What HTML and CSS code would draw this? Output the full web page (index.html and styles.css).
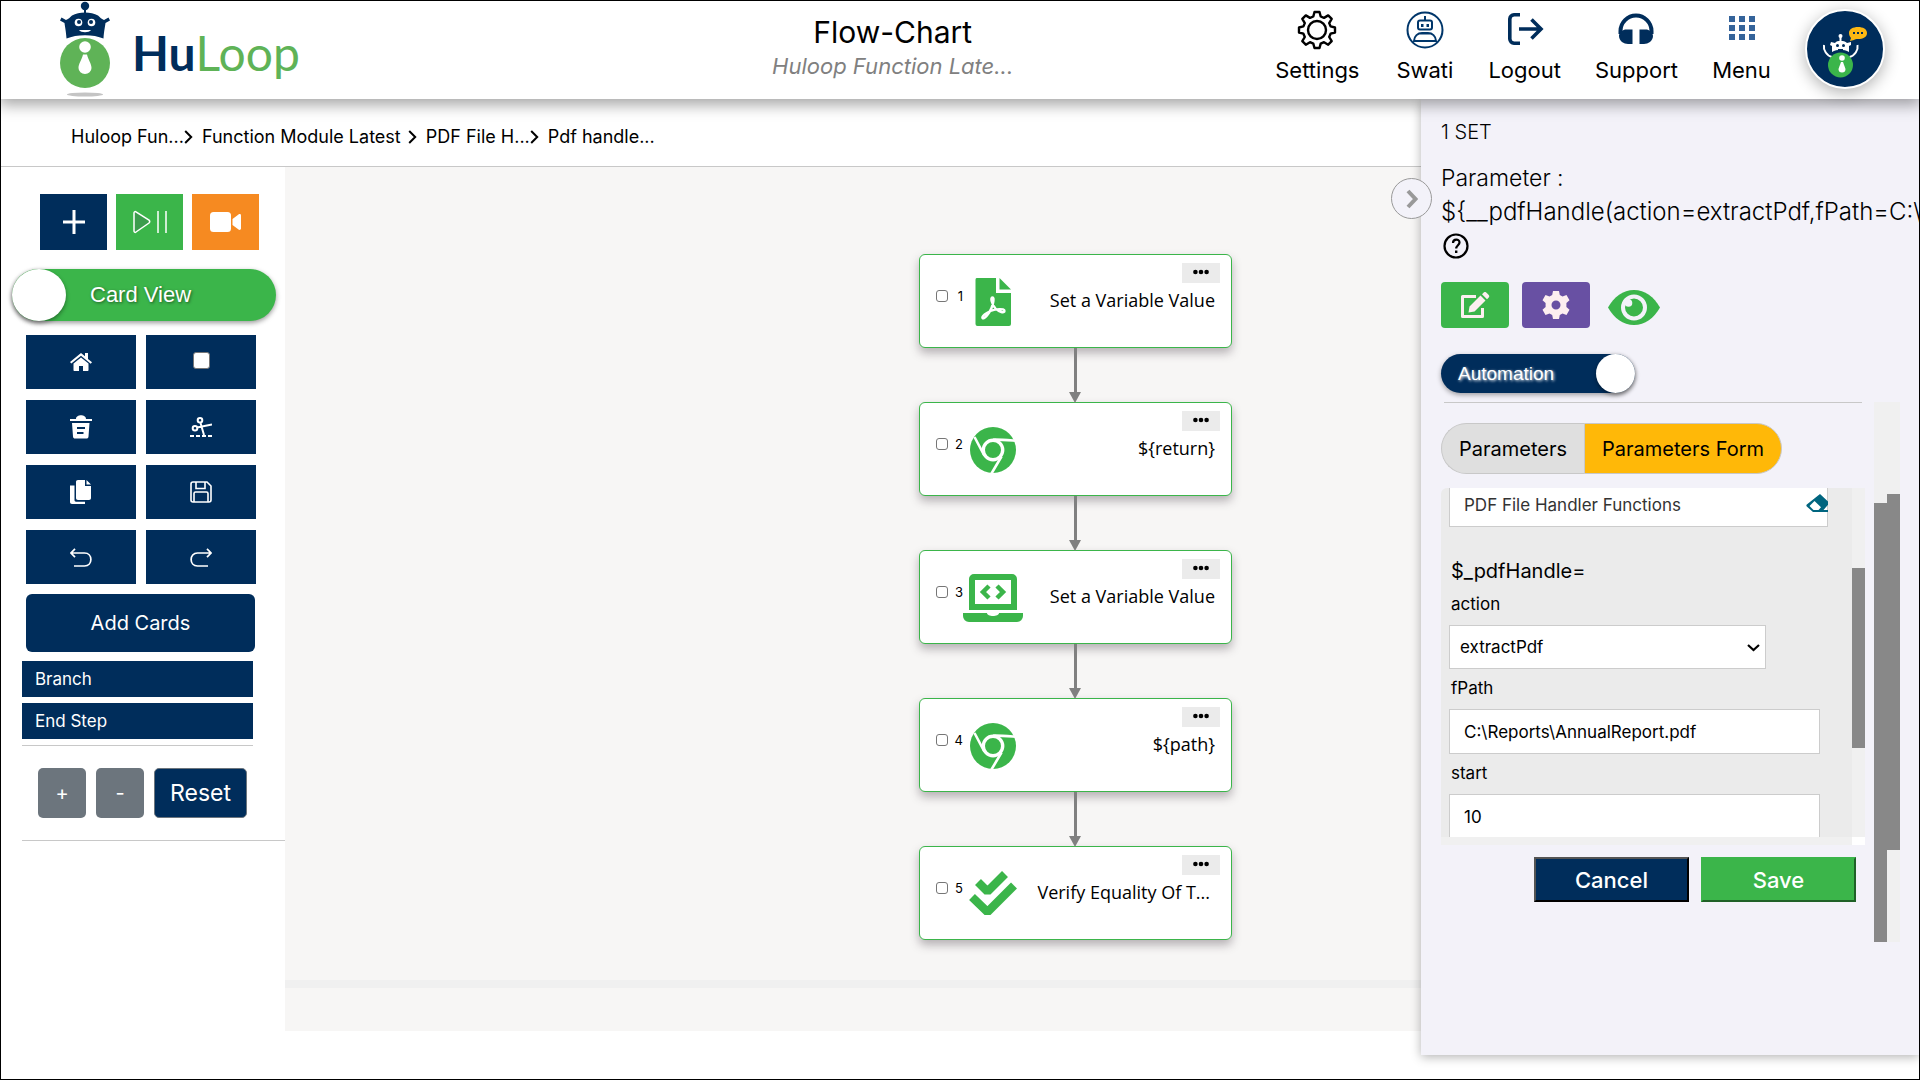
FILE: index.html
```html
<!DOCTYPE html>
<html lang="en">
<head>
<meta charset="utf-8">
<title>HuLoop Flow-Chart</title>
<meta name="viewport" content="width=device-width, initial-scale=1">
<link rel="stylesheet" href="styles.css">
</head>
<body>
<svg class="sprite" aria-hidden="true">
  <symbol id="i-chevron" viewBox="0 0 9 14"><path d="M1.2 1l6 6-6 6" fill="none" stroke="currentColor" stroke-width="2"/></symbol>
  <symbol id="i-dots" viewBox="0 0 16 6"><circle cx="2.4" cy="3" r="2.3"/><circle cx="8" cy="3" r="2.3"/><circle cx="13.6" cy="3" r="2.3"/></symbol>
  <symbol id="i-chrome" viewBox="0 0 48 48">
    <circle cx="24" cy="24" r="23" fill="#3bb54a"/>
    <circle cx="24" cy="24" r="9.7" fill="none" stroke="#fff" stroke-width="3.4"/>
    <path d="M24 13.7c7-.2 14 .4 22 1M15.300 29.500L5.500 11M32.500 30.500L22.500 47.500" fill="none" stroke="#fff" stroke-width="2.600"/>
  </symbol>
  <symbol id="i-eraser" viewBox="0 0 24 20"><path d="M14 0l9.500 9L17.500 16H24v2H7L.8 12.500a1.500 1.500 0 010-2zM8.500 7L3.500 12l4 4h5l2.500-2.700z" fill="#00657f" fill-rule="evenodd"/></symbol>
</svg>

<header class="topbar">
  <a class="brand" href="#" aria-label="HuLoop home">
    <svg class="brand-robot" viewBox="0 0 50 96" aria-hidden="true">
      <circle cx="25" cy="5" r="4.200" fill="#002d5b"/><path d="M24 8h2v6h-2z" fill="#002d5b"/>
      <path d="M6.500 37.500C6 30 5 26 4.500 22L0 19.500 1.500 16.500 6 19c3-1 4-3 6-4.500C19 10.500 31 10.500 38 14.500c2 1.500 3 3.500 6 4.500l4.500-2.500 1.500 3-4.500 2.500c-.5 4-1.500 8-2 15.500-10-4.500-27-4.500-37 0z" fill="#002d5b"/>
      <circle cx="18.500" cy="21.500" r="3.800" fill="#fff"/><circle cx="31.500" cy="21.500" r="3.800" fill="#fff"/>
      <circle cx="19" cy="21" r="2" fill="#002d5b"/><circle cx="31" cy="21" r="2" fill="#002d5b"/>
      <path d="M19 29h12c-2 3-10 3-12 0z" fill="#fff"/>
      <circle cx="25" cy="62" r="25" fill="#5fb357"/>
      <circle cx="25" cy="46" r="5.800" fill="#fff"/>
      <path d="M23 53.500h4c1 5 4.500 9 4.500 13.500a6.500 6 0 01-13 0c0-4.500 3.500-8.500 4.500-13.500z" fill="#fff"/>
      <ellipse cx="25" cy="93.500" rx="18" ry="2" fill="#c4c4c4"/>
    </svg>
    <span class="brand-name"><b>Hu</b>Loop</span>
  </a>
  <div class="title">
    <h1>Flow-Chart</h1>
    <p>Huloop Function Late...</p>
  </div>
  <nav class="topnav">
    <a href="#" class="wide">
      <svg width="40" height="40" viewBox="0 0 40 40" fill="none" stroke="#000" stroke-width="2.400" stroke-linejoin="round"><circle cx="20" cy="20" r="9"/><path d="M17.500 2h5l1.200 4.500 3.300 1.400 4.200-2.500 3.500 3.500-2.500 4.200 1.400 3.300 4.400 1.100v5l-4.400 1.200-1.400 3.300 2.500 4.200-3.500 3.500-4.200-2.500-3.300 1.400L22.500 38h-5l-1.200-4.400-3.300-1.400-4.200 2.500-3.500-3.500 2.500-4.200-1.400-3.300L2 22.500v-5l4.400-1.100 1.400-3.300-2.500-4.200 3.500-3.500L13 7.900l3.300-1.400z"/></svg>
      Settings</a>
    <a href="#">
      <svg width="40" height="40" viewBox="0 0 40 40" fill="none" stroke="#00366a" stroke-width="2"><circle cx="20" cy="20" r="17.500"/><rect x="13" y="10.500" width="14" height="9" rx="2"/><path d="M20 6v4M9 31c0-5 4-8 8-8h6c4 0 8 3 8 8zM14 23.500h12"/><path d="M16 14h2.500v3H16zM21.500 14H24v3h-2.500z" fill="#00366a" stroke="none"/></svg>
      Swati</a>
    <a href="#">
      <svg width="40" height="40" viewBox="0 0 40 40" fill="none" stroke="#002d5b" stroke-width="3.600"><path d="M11 4.800H5A4.500 4.500 0 00.800 9v20A4.500 4.500 0 005 33.200h6M10 19h21M22.500 9.500L32 19l-9.500 9.500" transform="translate(-2 0)" class="logout-arrow"/></svg>
      Logout</a>
    <a href="#">
      <svg width="40" height="40" viewBox="0 0 40 40"><path d="M4.500 24v-3a15.500 15.500 0 0131 0v3" fill="none" stroke="#002d5b" stroke-width="4"/><path d="M9 19.500h7.500V34H12c-4 0-9-3-9-8 0-2.500 2.500-5.500 6-6.500zM31 19.500h-7.500V34H28c4 0 9-3 9-8 0-2.500-2.500-5.500-6-6.500z" fill="#002d5b"/></svg>
      Support</a>
    <a href="#">
      <svg width="40" height="40" viewBox="0 0 40 40" fill="#34639a"><path d="M7 6h6v6H7zM17 6h6v6h-6zM27 6h6v6h-6zM7 15h6v6H7zM17 15h6v6h-6zM27 15h6v6h-6zM7 24h6v6H7zM17 24h6v6h-6zM27 24h6v6h-6z"/></svg>
      Menu</a>
    <button class="assistant" type="button" aria-label="Assistant">
      <svg width="76" height="76" viewBox="0 0 76 76" aria-hidden="true"><path d="M42 22c0-4 4-6 9-6s9 2 9 6-4 6-9 6c-2 0-3 0-4 1l-4 1 1-3c-1-1-2-3-2-5z" fill="#fdb813"/><path d="M46 21h2v2h-2zM50 21h2v2h-2zM54 21h2v2h-2z" fill="#002d5b"/><circle cx="33.500" cy="25" r="2" fill="#fff"/><path d="M32.500 26h2v4h-2zM24 31l4 1c2-3 9-3 12 0l4-1v3l-2 1v6c-5-3-12-3-17 0v-6l-2-1z" fill="#fff"/><circle cx="30.500" cy="34.500" r="1.500" fill="#002d5b"/><circle cx="36.500" cy="34.500" r="1.500" fill="#002d5b"/><path d="M31 38.500h5" stroke="#002d5b"/><path d="M17 34c-1 5 3 11 8 12M50.500 34c1 5-3 11-8 12" stroke="#fff" stroke-width="2" fill="none"/><circle cx="33.500" cy="54" r="12.500" fill="#3bb54a"/><circle cx="35" cy="47" r="2.800" fill="#fff"/><path d="M34 51h2l2.500 7a3.400 3.400 0 01-7 0z" fill="#fff"/></svg>
    </button>
  </nav>
</header>

<div class="page">
  <div class="main">
    <nav class="crumbs" aria-label="Breadcrumb">
      <a href="#">Huloop Fun...</a><svg class="tight"><use href="#i-chevron"/></svg>
      <a href="#">Function Module Latest</a><svg><use href="#i-chevron"/></svg>
      <a href="#">PDF File H...</a><svg class="tight"><use href="#i-chevron"/></svg>
      <a href="#">Pdf handle...</a>
    </nav>

    <div class="workspace">
      <aside class="sidebar">
        <div class="run-row">
          <button type="button" class="navy" aria-label="Add"><svg width="24" height="26" viewBox="0 0 24 26"><path d="M12 1v24M1 13h22" stroke="#fff" stroke-width="3"/></svg></button>
          <button type="button" class="green" aria-label="Run or pause"><svg width="34" height="24" viewBox="0 0 34 24"><path d="M1 3c0-1 1-2 2-1l13 8c1 1 1 2 0 3L3 22c-1 1-2 0-2-1z" fill="#3c9c4d" stroke="#fff" stroke-width="1.500"/><path d="M25 1v22M33 1v22" stroke="#fff" stroke-width="1.500"/></svg></button>
          <button type="button" class="orange" aria-label="Record"><svg width="32" height="20" viewBox="0 0 32 20" fill="#fff"><rect width="21" height="20" rx="3.500"/><path d="M22.500 7l6-4.500c1-.8 2.500-.3 2.500 1v13c0 1.300-1.500 1.800-2.500 1l-6-4.500z"/></svg></button>
        </div>

        <label class="view-toggle"><input type="checkbox" class="hidden-check"><span class="knob"></span><span>Card View</span></label>

        <div class="tools">
          <button type="button" aria-label="Home"><svg width="22" height="18" viewBox="0 0 22 18" fill="#fff"><path d="M0 9L11 0l4 3.300V0h3v6l4 3.200-1.300 1.500L11 2.700 1.300 10.500z"/><path d="M11 4.500l7.500 6V17c0 .6-.4 1-1 1H13v-5H9v5H4.500c-.6 0-1-.4-1-1v-6.500z"/></svg></button>
          <label class="tool-check"><input type="checkbox" aria-label="Select all"></label>
          <button type="button" aria-label="Delete"><svg width="22" height="24" viewBox="0 0 22 24" fill="#fff"><path d="M0 4h6c0-5 10-5 10 0h6v2H0z"/><path d="M2 8h17.500l-1 13.500c-.1 1.500-1 2-2 2h-11.500c-1 0-1.900-.5-2-2zM7 12v2h8v-2zM7 17v2h6.500v-2z" fill-rule="evenodd"/></svg></button>
          <button type="button" aria-label="Cut"><svg width="22" height="20" viewBox="0 0 22 20" fill="none" stroke="#fff" stroke-width="2"><circle cx="10" cy="3.300" r="2.300"/><circle cx="5" cy="11.300" r="2.300"/><path d="M10.500 6l3.500 12M7 10.500l15-3" /><path d="M0 19h4M6 19h4M12 19h4M18 19h4"/></svg></button>
          <button type="button" aria-label="Copy"><svg width="22" height="26" viewBox="0 0 22 26" fill="#fff"><path d="M8 1h7v6h6v12c0 1-.7 2-2 2H8c-1.300 0-2-.7-2-2V3c0-1.300.7-2 2-2zM16.500 1l4.500 4.500h-4.500z"/><path d="M0 6.500h4.500V21c0 1 .5 1.700 1.500 1.700h9V25H2c-1.300 0-2-.7-2-2z"/></svg></button>
          <button type="button" aria-label="Save flow"><svg width="22" height="22" viewBox="0 0 22 22" fill="none" stroke="#fff" stroke-width="1.600"><path d="M3 1h14l4 4v14a2 2 0 01-2 2H3a2 2 0 01-2-2V3a2 2 0 012-2zM6 1v6.500h9V1M4 21v-8.500c0-.8.500-1.500 1.500-1.500h11c1 0 1.500.7 1.500 1.500V21"/></svg></button>
          <button type="button" aria-label="Undo"><svg width="22" height="19" viewBox="0 0 22 19" fill="none" stroke="#fff" stroke-width="1.700"><path d="M1 5h13.500c8.500 0 8.500 13 0 13H4M5 .8L1 5l4 4.200"/></svg></button>
          <button type="button" aria-label="Redo"><svg width="22" height="19" viewBox="0 0 22 19" fill="none" stroke="#fff" stroke-width="1.700"><path d="M21 5H7.500c-8.500 0-8.500 13 0 13H18M17 .8L21 5l-4 4.200"/></svg></button>
        </div>

        <button type="button" class="add-cards">Add Cards</button>
        <div class="card-types">
          <button type="button">Branch</button>
          <button type="button">End Step</button>
        </div>
        <div class="zoom-row">
          <button type="button" class="grey">+</button>
          <button type="button" class="grey">-</button>
          <button type="button" class="reset">Reset</button>
        </div>
      </aside>

      <main class="canvas">
        <ol class="flow">
          <li class="node">
            <input type="checkbox" aria-label="Select step 1"><span class="num">1</span>
            <svg class="node-icon" viewBox="0 0 60 48"><path d="M13.500 0H33v15h15v31a2 2 0 01-2 2H14.500a2 2 0 01-2-2V2a2 2 0 011-2z" fill="#3bb54a"/><path d="M36.500 0L48 11.500H36.500z" fill="#3bb54a"/><path d="M29.500 19.500c-2.500 0-.5 7 3 11 3.500 3.500 9 5 9 2.500 0-3-9-2-14 0-4 1.700-9 5-8 7 1.500 2 7-5 9-10 1.700-4 3-10.500 1-10.500z" fill="none" stroke="#fff" stroke-width="2.400"/></svg>
            <span class="label">Set a Variable Value</span>
            <button type="button" class="more" aria-label="More"><svg><use href="#i-dots"/></svg></button>
          </li>
          <li class="node">
            <input type="checkbox" aria-label="Select step 2"><span class="num">2</span>
            <svg class="node-icon" viewBox="0 0 60 48"><use href="#i-chrome" x="6" width="48" height="48"/></svg>
            <span class="label">${return}</span>
            <button type="button" class="more" aria-label="More"><svg><use href="#i-dots"/></svg></button>
          </li>
          <li class="node">
            <input type="checkbox" aria-label="Select step 3"><span class="num">3</span>
            <svg class="node-icon" viewBox="0 0 60 48"><path d="M11 0h38a5 5 0 015 5v31H6V5a5 5 0 015-5zm1 6v24h36V6z" fill="#3bb54a" fill-rule="evenodd"/><path d="M26 12l-6 6 6 6M34 12l6 6-6 6" fill="none" stroke="#3bb54a" stroke-width="4.500"/><path d="M0 39h24c0 4 12 4 12 0h24v3a6 6 0 01-6 6H6a6 6 0 01-6-6z" fill="#3bb54a"/></svg>
            <span class="label">Set a Variable Value</span>
            <button type="button" class="more" aria-label="More"><svg><use href="#i-dots"/></svg></button>
          </li>
          <li class="node">
            <input type="checkbox" aria-label="Select step 4"><span class="num">4</span>
            <svg class="node-icon" viewBox="0 0 60 48"><use href="#i-chrome" x="6" width="48" height="48"/></svg>
            <span class="label">${path}</span>
            <button type="button" class="more" aria-label="More"><svg><use href="#i-dots"/></svg></button>
          </li>
          <li class="node">
            <input type="checkbox" aria-label="Select step 5"><span class="num">5</span>
            <svg class="node-icon" viewBox="0 0 60 48" fill="none" stroke="#3bb54a" stroke-width="8.400" stroke-linejoin="bevel"><path d="M15 12l9.500 9.500L42 4M9 27l15.500 15L51 15.500"/></svg>
            <span class="label clipped">Verify Equality Of T...</span>
            <button type="button" class="more" aria-label="More"><svg><use href="#i-dots"/></svg></button>
          </li>
        </ol>
        <div class="canvas-scroll"></div>
      </main>
    </div>
  </div>

  <section class="panel">
    <button type="button" class="collapse" aria-label="Collapse panel"><svg width="12" height="20" viewBox="0 0 12 20"><path d="M2 2l7.500 8L2 18" fill="none" stroke="#999" stroke-width="4"/></svg></button>
    <h2>1 SET</h2>
    <p class="param">Parameter :<br><span>${__pdfHandle(action=extractPdf,fPath=C:\</span></p>
    <button type="button" class="help" aria-label="Help"><svg width="26" height="26" viewBox="0 0 26 26" fill="none" stroke="#000"><circle cx="13" cy="13" r="11.500" stroke-width="2.200"/><path d="M10 10c0-4.500 6.500-4.500 6.500-.5 0 2.500-3.300 3-3.300 6" stroke-width="2.200"/><path d="M13.200 17.500v2.500" stroke-width="2.400"/></svg></button>

    <div class="actions">
      <button type="button" class="green" aria-label="Edit"><svg width="30" height="27" viewBox="0 0 30 27"><path d="M16 4.500H2.500v20h20V16" fill="none" stroke="#fdeff0" stroke-width="3" stroke-linejoin="round"/><path d="M8.500 20.500l1-6L20.500 3.500l5 5-11 11zM22 2.200l1.500-1.500c1-1 2-1 3 0l2 2c1 1 1 2 0 3L27 7.200z" fill="#fdeff0"/></svg></button>
      <button type="button" class="purple" aria-label="Configure"><svg width="28" height="28" viewBox="0 0 28 28"><path d="M11 0h6l.8 4 2.700 1.500L24.500 4l3 5.200-3.100 2.700v4.200l3.100 2.700-3 5.200-4-1.500-2.700 1.500L17 28h-6l-.8-4-2.700-1.500-4 1.500-3-5.200 3.100-2.700v-4.200L.5 9.200l3-5.200 4 1.500L10.200 4zM14 9.500a4.500 4.500 0 100 9 4.500 4.500 0 000-9z" fill="#fdeff0" fill-rule="evenodd"/></svg></button>
      <button type="button" class="eye" aria-label="Preview"><svg width="52" height="35" viewBox="0 0 52 35"><path d="M0 17.500C6 7 15 0 26 0s20 7 26 17.500C46 28 37 35 26 35S6 28 0 17.500z" fill="#3bb54a"/><circle cx="26" cy="17.500" r="11" fill="#3bb54a" stroke="#f3f2f9" stroke-width="4"/><path d="M21 8.500v6h-5z" fill="#f3f2f9"/><circle cx="20.500" cy="13" r="3.800" fill="#f3f2f9"/></svg></button>
    </div>

    <label class="auto-toggle"><input type="checkbox" class="hidden-check" checked><span>Automation</span><span class="knob"></span></label>

    <div class="panel-scroll">
      <div class="panel-body">
        <hr>
        <div class="tabs">
          <button type="button">Parameters</button><button type="button" class="active">Parameters Form</button>
        </div>

        <form class="form" id="params">
          <div class="form-body">
            <div class="lookup">
              <input type="text" value="PDF File Handler Functions" aria-label="Function group">
              <svg><use href="#i-eraser" width="24" height="20"/></svg>
            </div>
            <h3>$_pdfHandle=</h3>
            <label for="action">action</label>
            <div class="select"><select id="action"><option>extractPdf</option></select><svg width="13" height="8" viewBox="0 0 13 8"><path d="M1 1l5.500 5L12 1" fill="none" stroke="#000" stroke-width="2.200"/></svg></div>
            <label for="fpath">fPath</label>
            <input id="fpath" type="text" value="C:\Reports\AnnualReport.pdf">
            <label for="start">start</label>
            <input id="start" type="text" value="10">
          </div>
          <div class="track form-track"><div class="thumb"></div></div>
          <div class="form-hscroll"></div>
          <div class="form-corner"></div>
        </form>

        <div class="submit">
          <button type="button" class="cancel">Cancel</button>
          <button type="submit" form="params" class="save">Save</button>
        </div>
      </div>
      <div class="track inner-track"><div class="thumb"></div></div>
      <div class="track outer-track"><div class="thumb"></div></div>
    </div>
  </section>
</div>
</body>
</html>
```
FILE: styles.css
```css
:root {
  --navy: #002d5b;
  --green: #3bb54a;
  --line: #c8c8c8;
  --ui: Inter, "Open Sans", sans-serif;
}

* { box-sizing: border-box; }

body {
  margin: 0;
  min-height: 100vh;
  border: 1px solid #000;
  background: #fff;
  color: #000;
  font-family: var(--ui);
  font-size: 16px;
  overflow-x: hidden;
}

button, input, select { font: inherit; color: inherit; }
button { padding: 0; border: 0; background: none; cursor: pointer; }
a { color: inherit; text-decoration: none; }
h1, h2, h3, p, ol { margin: 0; padding: 0; font-weight: 400; }
svg { flex: none; display: block; }
.sprite { position: absolute; width: 0; height: 0; }
.hidden-check { position: absolute; opacity: 0; }
.navy { background: var(--navy); }
.green { background: var(--green); }
.orange { background: #f68a21; }
.purple { background: #6850a3; }

/* Top bar */
.topbar {
  position: relative;
  z-index: 2;
  display: flex;
  height: 98px;
  padding-right: 34px;
  background: #fff;
  box-shadow: 0 4px 14px 2px rgba(0, 0, 0, .35);
}
.brand { display: flex; gap: 22px; width: 511px; padding-left: 59px; }
.brand-robot { width: 50px; height: 96px; }
.brand-name {
  padding-top: 23px;
  color: #5fb357;
  font: 400 48px/58px Lato, sans-serif;
}
.brand-name b { color: var(--navy); font-weight: 700; }
.title { flex: 1; padding-top: 12px; text-align: center; }
.title h1 { font-size: 30px; line-height: 38px; }
.title p { color: #808080; font-size: 22px; line-height: 30px; font-style: italic; }
.topnav { display: flex; gap: 34px; }
.topnav a {
  display: flex;
  flex-direction: column;
  align-items: center;
  gap: 4px;
  min-width: 59px;
  padding-top: 9px;
  font-size: 22px;
  line-height: 32px;
}
.topnav .wide { min-width: 88px; }
.logout-arrow { transform: translateX(4px); }
.assistant {
  width: 80px;
  height: 80px;
  margin-top: 8px;
  border: 2px solid #fff;
  border-radius: 50%;
  background: var(--navy);
  box-shadow: 0 4px 16px rgba(0, 0, 0, .3);
}

.page { display: flex; align-items: flex-start; }
.main { flex: 1; min-width: 0; }

.crumbs {
  display: flex;
  align-items: center;
  height: 68px;
  padding: 8px 0 0 70px;
  border-bottom: 1px solid var(--line);
  font-size: 18px;
}
.crumbs svg { width: 9px; height: 14px; margin: 0 9px 0 7px; }
.crumbs .tight { margin-left: 0; }

.workspace { display: flex; align-items: flex-start; }

/* Left tool column */
.sidebar { width: 284px; padding-top: 27px; }
.run-row { display: flex; gap: 9px; padding-left: 39px; }
.run-row button { display: grid; place-items: center; width: 67px; height: 56px; }
.view-toggle {
  display: flex;
  align-items: center;
  gap: 24px;
  width: 264px;
  height: 52px;
  margin: 19px 0 14px 11px;
  border-radius: 26px;
  background: var(--green);
  box-shadow: 0 2px 5px rgba(0, 0, 0, .4);
  color: #fff;
  font: 22px/52px "Liberation Sans", sans-serif;
  text-shadow: 1px 1px 3px rgba(0, 0, 0, .5);
}
.knob { background: #fff; border-radius: 50%; box-shadow: 0 2px 4px rgba(0, 0, 0, .4); }
.view-toggle .knob { width: 54px; height: 52px; }
.tools {
  display: grid;
  grid-template-columns: 110px 110px;
  gap: 11px 10px;
  padding-left: 25px;
}
.tools > * { display: grid; place-items: center; height: 54px; background: var(--navy); }
.tools .tool-check { padding-bottom: 4px; }
.add-cards {
  display: block;
  width: 229px;
  height: 58px;
  margin: 10px 0 9px 25px;
  border-radius: 6px;
  background: var(--navy);
  color: #fff;
  font-size: 20px;
}
.card-types {
  display: grid;
  gap: 6px;
  width: 231px;
  margin-left: 21px;
  padding-bottom: 6px;
  border-bottom: 1px solid var(--line);
}
.card-types button {
  height: 36px;
  padding-left: 13px;
  background: var(--navy);
  color: #fff;
  font-size: 17px;
  text-align: left;
}
.zoom-row {
  display: flex;
  gap: 10px;
  margin-left: 21px;
  padding: 22px 0 22px 16px;
  border-bottom: 1px solid var(--line);
  color: #fff;
}
.zoom-row button { height: 50px; border-radius: 5px; }
.grey { width: 48px; background: #6c757d; font-size: 20px; }
.reset { width: 93px; border: 1px solid #6c757d; background: var(--navy); font-size: 23px; }

/* Flow canvas */
.canvas { flex: 1; padding-bottom: 43px; background: #f7f6f5; }
.flow { padding: 87px 0 40px 634px; list-style: none; }
.node {
  position: relative;
  display: flex;
  align-items: flex-start;
  width: 313px;
  height: 94px;
  padding: 23px 16px 0 16px;
  border: 1px solid var(--green);
  border-radius: 6px;
  background: #fff;
  box-shadow: 0 5px 10px rgba(60, 50, 60, .35);
}
.node + .node { margin-top: 54px; }
.node + .node::before, .node + .node::after {
  content: "";
  position: absolute;
  left: 50%;
}
.node + .node::before {
  top: -55px;
  width: 3px;
  height: 46px;
  margin-left: -2px;
  background: #808080;
}
.node + .node::after {
  top: -11px;
  margin-left: -7px;
  border: 6px solid transparent;
  border-top: 11px solid #808080;
  border-bottom: 0;
}
input[type="checkbox"] {
  appearance: none;
  width: 12px;
  height: 12px;
  margin: 12px 0 0;
  border: 1px solid #767676;
  border-radius: 3px;
  background: #fff;
}
.tool-check input[type="checkbox"] { width: 17px; height: 17px; margin: 0; }
.num { width: 15px; padding-top: 8px; font-size: 13px; line-height: 20px; text-align: right; }
.node-icon { width: 60px; height: 48px; }
.label {
  flex: 1;
  padding-top: 8px;
  font: 400 18px/28px "Open Sans", "Noto Sans", sans-serif;
  text-align: right;
  white-space: nowrap;
}
.clipped { padding-right: 5px; }
.more {
  position: absolute;
  top: 8px;
  right: 11px;
  display: grid;
  justify-content: center;
  width: 38px;
  height: 20px;
  padding-top: 6px;
  background: #ebebeb;
}
.more svg { width: 16px; height: 6px; }
.canvas-scroll { height: 8px; background: #f0f0f0; }

/* Step details */
.panel {
  position: relative;
  width: 498px;
  padding: 17px 19px 113px 20px;
  background: #f3f2f9;
  box-shadow: 0 2px 10px rgba(0, 0, 0, .3);
}
.panel h2 { font-size: 20px; line-height: 33px; font-weight: 300; }
.param {
  margin: 13px -19px 0 0;
  overflow: hidden;
  font-size: 23px;
  line-height: 33px;
  font-weight: 300;
  white-space: nowrap;
}
.param span { font-size: 24px; }
.collapse {
  position: absolute;
  top: 79px;
  left: -30px;
  display: grid;
  place-items: center;
  width: 41px;
  height: 41px;
  border: 1px solid #999;
  border-radius: 50%;
  background: #f3f2f9;
}
.help { display: grid; place-items: center; width: 30px; height: 33px; }
.actions { display: flex; gap: 13px; margin-top: 20px; }
.actions button { display: grid; place-items: center; width: 68px; height: 46px; border-radius: 4px; }
.actions .eye { width: 62px; padding-top: 4px; }
.auto-toggle {
  display: flex;
  align-items: center;
  justify-content: space-between;
  width: 194px;
  height: 39px;
  margin: 26px 0 9px;
  padding-left: 17px;
  border-radius: 20px;
  background: var(--navy);
  box-shadow: 0 2px 5px rgba(0, 0, 0, .35);
  color: #fff;
  font: 19px/39px "Liberation Sans", sans-serif;
  text-shadow: 1px 1px 3px #fff;
}
.auto-toggle .knob { width: 39px; height: 39px; }

.panel-scroll { display: flex; height: 540px; }
.panel-body { flex: 1; margin-right: 9px; }
.panel-body hr { margin: 0 3px 20px; border: 0; border-top: 1px solid var(--line); }
.tabs { display: flex; }
.tabs button {
  height: 51px;
  padding: 0 17px;
  border: 1px solid #c8c8c8;
  border-right: 0;
  border-radius: 26px 0 0 26px;
  background: #dfdfdf;
  font-size: 20px;
}
.tabs .active {
  border-right: 1px solid #c8c8c8;
  border-radius: 0 26px 26px 0;
  background: #ffb808;
}

.form {
  display: grid;
  grid-template: 349px 8px / 1fr 13px;
  margin-top: 14px;
  border-radius: 6px 0 0 0;
  overflow: hidden;
}
.form-body { padding: 0 45px 0 8px; overflow: hidden; background: #ebebeb; font-size: 17px; }
.form-body h3 { margin: 38px 0 0 2px; font-size: 20px; line-height: 24px; }
.form-body label { display: block; margin: 7px 0 9px 2px; line-height: 24px; }
.form-body h3 + label { margin-top: 9px; }
.form-body input, .form-body select {
  display: block;
  width: 371px;
  height: 45px;
  margin: 0;
  padding: 0 14px;
  border: 1px solid #ccc;
  border-radius: 0;
  background: #fff;
  appearance: none;
}
.lookup { position: relative; width: 379px; height: 39px; }
.form-body .lookup input { width: 100%; margin-top: -6px; color: #333; }
.lookup svg { position: absolute; right: 0; top: 12px; width: 22px; height: 20px; overflow: hidden; }
.select { position: relative; width: 317px; }
.form-body .select select { width: 100%; height: 44px; padding: 0 10px; }
.select svg { position: absolute; right: 6px; top: 19px; pointer-events: none; }
.form-hscroll { background: #f0f0f0; }
.form-corner { background: #fff; }

.track { width: 13px; background: #f0f0f0; }
.thumb { background: #888; }
.form-track { padding-top: 80px; }
.form-track .thumb { height: 180px; }
.inner-track { padding-top: 101px; }
.inner-track .thumb { height: 439px; }
.outer-track { padding-top: 92px; }
.outer-track .thumb { height: 356px; }

.submit { display: flex; justify-content: flex-end; gap: 12px; margin: 12px 9px 0 0; }
.submit button {
  width: 155px;
  height: 45px;
  color: #fff;
  font-size: 22px;
  font-weight: 500;
}
.cancel { border: 2px outset #000; background: var(--navy); }
.save { border: 2px outset var(--green); background: var(--green); }
```
